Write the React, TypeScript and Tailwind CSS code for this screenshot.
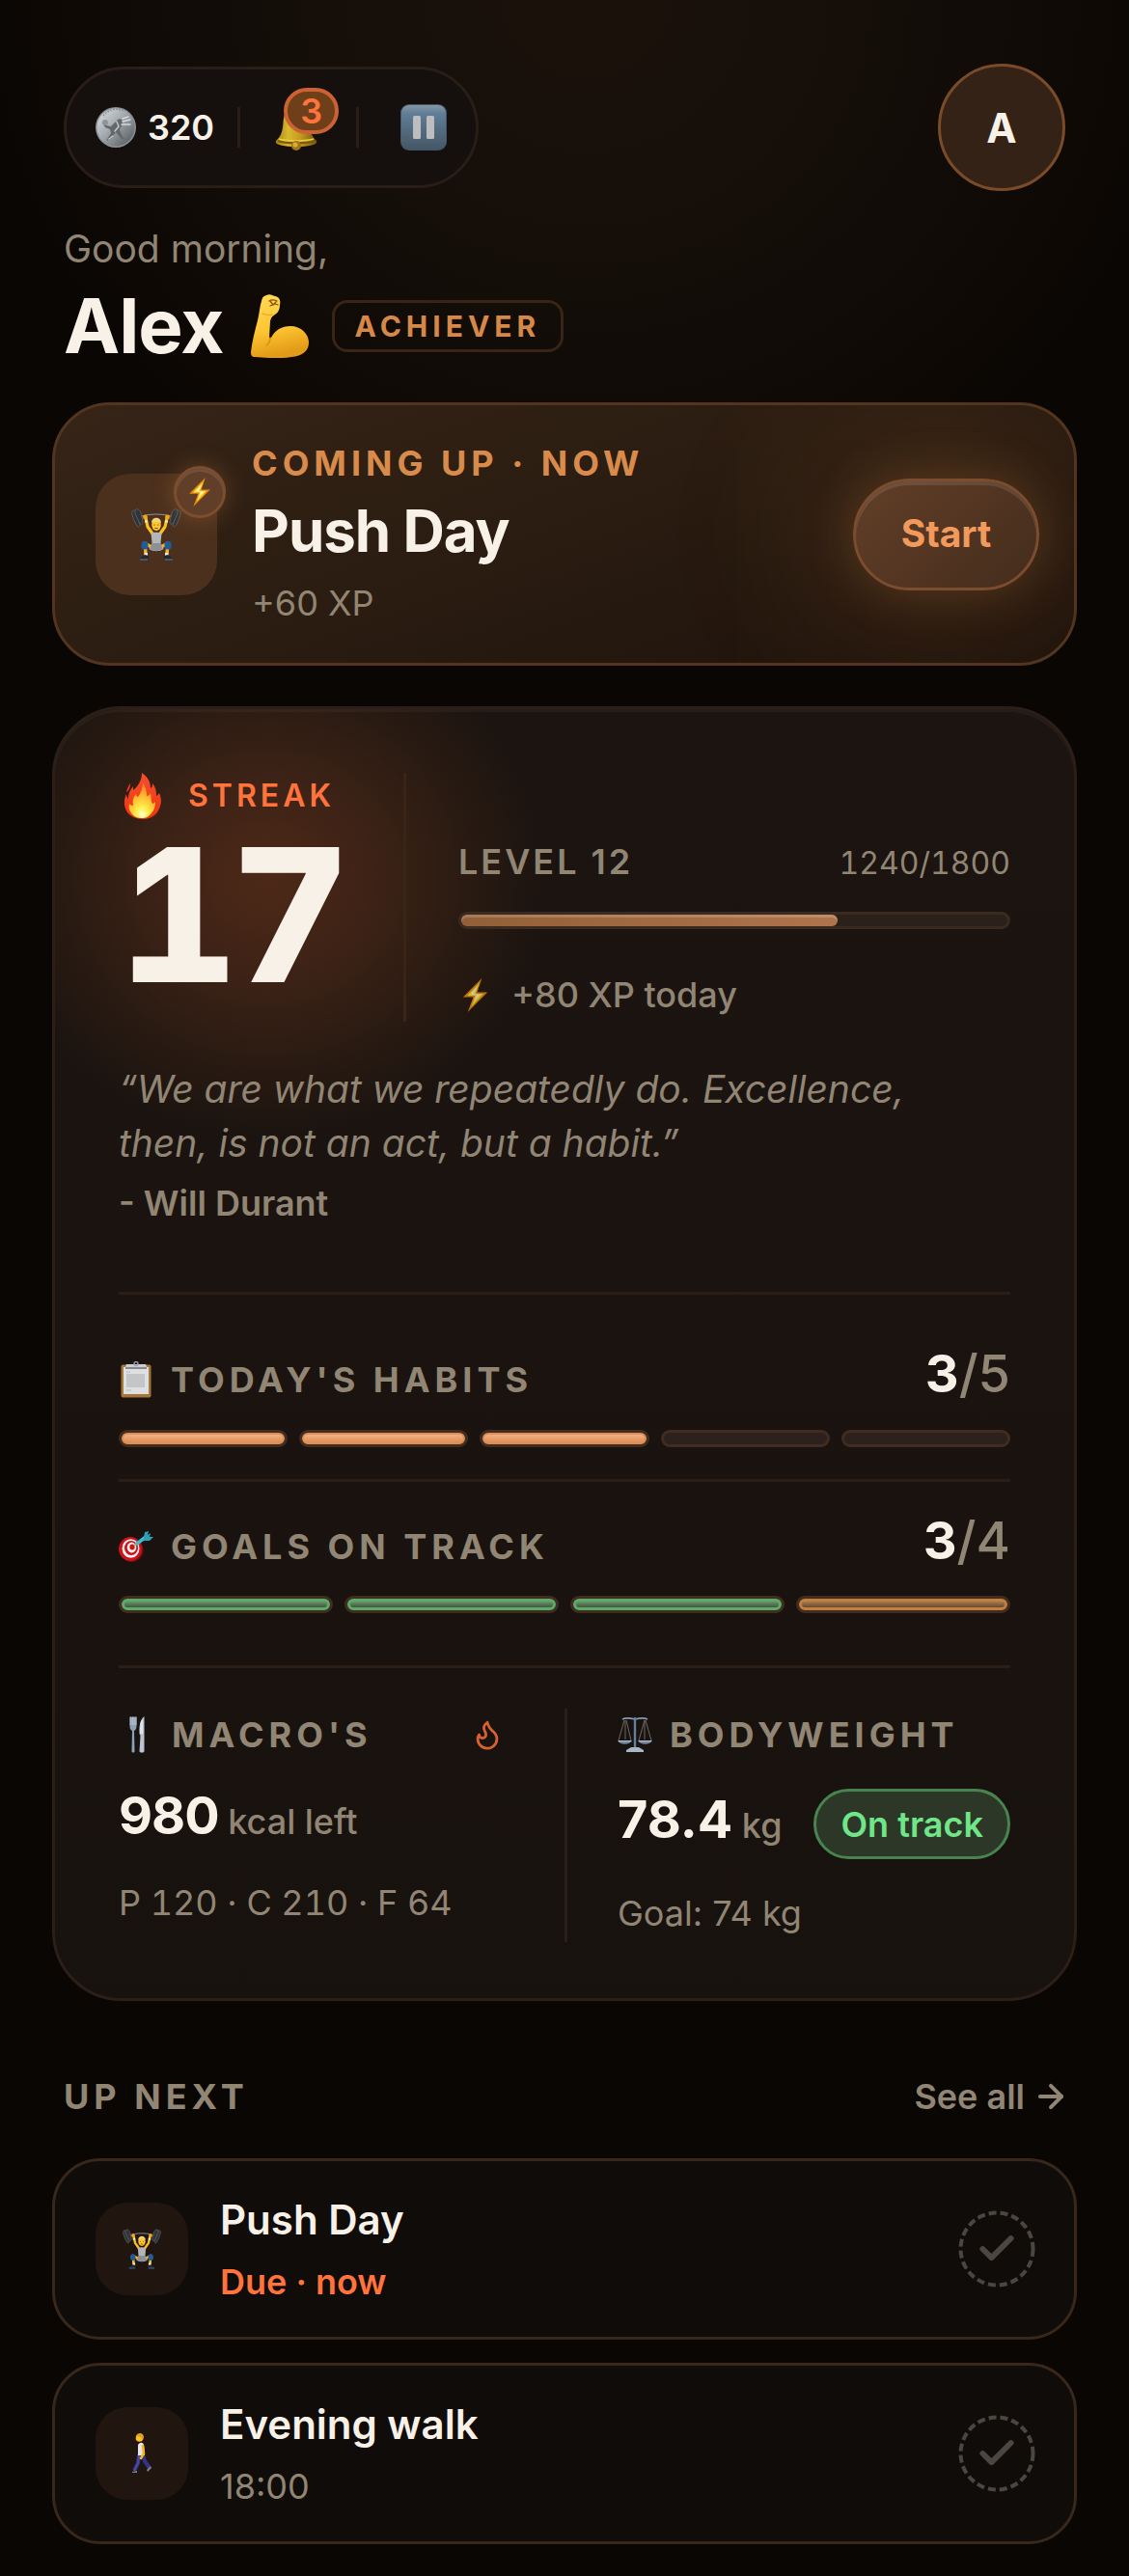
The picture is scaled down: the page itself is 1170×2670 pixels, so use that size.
import { ArrowRight, Check, Flame } from "lucide-react";

type IconProps = { className?: string };

const CoinIcon = ({ className }: IconProps) => (
    <svg viewBox="0 0 42 42" className={className} aria-hidden="true">
        <defs>
            <linearGradient id="coin" x1="0" y1="0" x2="1" y2="1">
                <stop offset="0" stopColor="#dfe3e6" />
                <stop offset="0.45" stopColor="#a3a9ad" />
                <stop offset="1" stopColor="#4c5154" />
            </linearGradient>
        </defs>
        <circle cx="21" cy="21" r="21" fill="#8b9195" />
        <circle cx="21" cy="21" r="19.500" fill="url(#coin)" />
        <path d="M8 9a17 17 0 0 1 21-5" fill="none" stroke="#8b9094" strokeWidth="1.500" strokeDasharray="2 1" />
        <path d="M23 13c3-2 5 0 5 3 0 4-3 5-3 8l3 7 4 3-5-1-6-7-5 7-5 2 5-8-1-4-5-2-2-3 3 1 5 1z" fill="#62686c" />
        <path d="M28 12l6-2M28 15l8-2M27 18l9 0" stroke="#d5d9db" strokeWidth="1.500" strokeLinecap="round" />
        <path d="M22 15l2 5-4 5M18 30l-4 3" fill="none" stroke="#c3c8cb" strokeWidth="1.500" strokeLinecap="round" />
        <circle cx="10" cy="16" r="3" fill="#8d9397" />
    </svg>
);

const BellIcon = ({ className }: IconProps) => (
    <svg viewBox="0 0 44 50" className={className} aria-hidden="true">
        <defs>
            <linearGradient id="bell" x1="0" x2="1">
                <stop offset="0" stopColor="#a47f14" />
                <stop offset="0.3" stopColor="#d9b92c" />
                <stop offset="0.6" stopColor="#c69a1e" />
                <stop offset="1" stopColor="#75550c" />
            </linearGradient>
        </defs>
        <circle cx="22" cy="4" r="3.500" fill="#a8841b" />
        <path d="M22 4c-9 0-13 6-13.500 16C8 31 5 35 1 39c-2 4 8 6 21 6s23-2 21-6c-4-4-7-8-7.500-19C35 10 31 4 22 4z" fill="url(#bell)" />
        <path d="M3 39c6 3 32 3 38 0" fill="none" stroke="#7c5b0d" strokeWidth="2" />
        <path d="M4 37c6 2.500 30 2.500 36 0" fill="none" stroke="#e7cf45" strokeWidth="1.500" />
        <circle cx="22" cy="44" r="5" fill="#a37519" />
        <circle cx="21" cy="43" r="2.500" fill="#d6b036" />
    </svg>
);

const PauseIcon = ({ className }: IconProps) => (
    <svg viewBox="0 0 48 48" className={className} aria-hidden="true">
        <defs>
            <linearGradient id="pause" x1="0" y1="0" x2="0" y2="1">
                <stop offset="0" stopColor="#8797a4" />
                <stop offset="0.2" stopColor="#5f7d96" />
                <stop offset="1" stopColor="#465866" />
            </linearGradient>
        </defs>
        <rect width="48" height="48" rx="9" fill="#41576a" />
        <rect x="1" y="1" width="46" height="45" rx="8" fill="url(#pause)" />
        <rect x="13" y="12" width="8" height="24" rx="1.500" fill="#bdbdbf" />
        <rect x="27" y="12" width="8" height="24" rx="1.500" fill="#bdbdbf" />
    </svg>
);

const MuscleIcon = ({ className }: IconProps) => (
    <svg viewBox="0 0 60 66" className={className} aria-hidden="true">
        <defs>
            <linearGradient id="muscle" x1="0" y1="0" x2="0.2" y2="1">
                <stop offset="0" stopColor="#ffdb58" />
                <stop offset="0.6" stopColor="#fdc533" />
                <stop offset="1" stopColor="#e39a16" />
            </linearGradient>
        </defs>
        <path d="M16 1c4-2 6 0 9 1 5 1 6 5 5 9 0 3-1 8-5 10-3 2-4 3-5 7l-1 17c0 1 1 1 2 0 4-8 11-12 20-12 11 0 19 8 19 17 0 9-7 14-18 15-13 2-26 1-38 0-3 0-4-2-4-5 1-10 4-22 7-33 2-8 2-14 4-20 1-4 2-5 5-6z" fill="url(#muscle)" />
        <path d="M19 7c3-2 6-1 8 0M20 7l3 4 3-3M20 12l5-2 3 1" fill="none" stroke="#8a5208" strokeWidth="1.300" strokeLinecap="round" />
        <path d="M20 45c0 4-1 6-4 8" fill="none" stroke="#d88f12" strokeWidth="1.500" strokeLinecap="round" />
        <path d="M12 20c4 2 7 2 10 1" fill="none" stroke="#edae25" strokeWidth="1.500" strokeLinecap="round" />
    </svg>
);

const LifterIcon = ({ className }: IconProps) => (
    <svg viewBox="0 0 52 54" className={className} aria-hidden="true">
        <path d="M8 9c10-4 26-4 36 0" fill="none" stroke="#8d9397" strokeWidth="1.200" />
        <g fill="#2f3337" stroke="#62686c" strokeWidth="0.800">
            <path d="M1 3c2-2 3-1 4 1l4 13c0 2-2 3-3 1C3 13 0 6 1 3z" />
            <path d="M5 1c2-1 4 1 5 4l2 9c0 3-3 3-4 0L4 5c0-2 0-3 1-4z" />
            <path d="M51 3c-2-2-3-1-4 1l-4 13c0 2 2 3 3 1 3-5 6-12 5-15z" />
            <path d="M47 1c-2-1-4 1-5 4l-2 9c0 3 3 3 4 0l4-9c0-2 0-3-1-4z" />
        </g>
        <path d="M15 10l2 9 5 7M37 10l-2 9-5 7" fill="none" stroke="#fdbf1c" strokeWidth="3.200" strokeLinecap="round" strokeLinejoin="round" />
        <path d="M14 13.500h3M35 13.500h3" stroke="#e9e9ea" strokeWidth="2" />
        <circle cx="14.500" cy="9" r="2.400" fill="#f1a911" />
        <circle cx="37.500" cy="9" r="2.400" fill="#f1a911" />
        <path d="M21 40l-7-4 1 11M31 40l7-4-1 11" fill="none" stroke="#fbb714" strokeWidth="3.400" strokeLinejoin="round" />
        <path d="M20.500 25.500c3-1 8-1 11 0L30.500 36l3 6c-4 3-11 3-15 0l3-6z" fill="#b4b5b8" />
        <path d="M21.500 36h9l2 6c-4 2.500-9 2.500-13 0z" fill="#8e9094" />
        <rect x="10.500" y="34" width="7" height="8.500" rx="3" fill="#1f5c9c" />
        <rect x="34.500" y="34" width="7" height="8.500" rx="3" fill="#1f5c9c" />
        <path d="M13.500 46h3.500v3h-3.500zM35 46h3.500v3H35z" fill="#e8e8e8" />
        <path d="M18 49v3l-9 1c0-3 3-3 5-5zM34 49v3l9 1c0-3-3-3-5-5z" fill="#25282c" />
        <path d="M9 53h8M35 53h8" stroke="#4a82b8" strokeWidth="1" />
        <ellipse cx="26" cy="17" rx="4.800" ry="6" fill="#fec62d" />
        <path d="M21 15c0-7 10-7 10 0-3-2-7-2-10 0z" fill="#f3d27a" />
        <path d="M24 16.500v1.200M28 16.500v1.200M24.300 20.500h3.400" stroke="#6b3c09" strokeWidth="0.900" />
    </svg>
);

const WalkerIcon = ({ className }: IconProps) => (
    <svg viewBox="0 0 20 42" className={className} aria-hidden="true">
        <path d="M7 22l-1 9-4 8M11 22l2 7 5 7" fill="none" stroke="#33338a" strokeWidth="4" strokeLinejoin="round" />
        <path d="M7 23l-1 8-4 8" fill="none" stroke="#4a4ba6" strokeWidth="2" />
        <path d="M6 12c2-3 5-3 6 0l1 11H6z" fill="#e3e6ec" />
        <path d="M11 13l1 8-3 5" fill="none" stroke="#f7b51c" strokeWidth="2.600" strokeLinecap="round" />
        <path d="M0 40l5-1v2H0zM15 38l4-4 1 2-4 4z" fill="#7b7f88" />
        <circle cx="7.500" cy="5" r="3.800" fill="#fdbf24" />
        <path d="M4 3c1-4 8-4 8 1l-1 3-2-3z" fill="#dda01f" />
    </svg>
);

const BoltIcon = ({ className }: IconProps) => (
    <svg viewBox="0 0 26 36" className={className} aria-hidden="true">
        <path d="M20 0L0 20h11L5 36l21-21H15z" fill="#e58d0a" />
        <path d="M17.500 5L4.500 18.500H13L9 30l12.500-13.500H13z" fill="#ffe04a" />
        <path d="M15 9l-7 8h7l-3 7 6-6.500h-7z" fill="#fff6c4" />
    </svg>
);

const FireIcon = ({ className }: IconProps) => (
    <svg viewBox="0 0 38 48" className={className} aria-hidden="true">
        <defs>
            <linearGradient id="fireOuter" x1="0" y1="0" x2="0" y2="1">
                <stop offset="0" stopColor="#f4502d" />
                <stop offset="1" stopColor="#f0330f" />
            </linearGradient>
            <radialGradient id="fireInner" cx="0.5" cy="0.9" r="0.85">
                <stop offset="0" stopColor="#fffde0" />
                <stop offset="0.25" stopColor="#fff04a" />
                <stop offset="0.6" stopColor="#fdbb30" />
                <stop offset="1" stopColor="#fb7b2c" />
            </radialGradient>
        </defs>
        <path d="M18 0c7 5 9 10 9 16 2-1 2-3 2-5 4 5 4 9 4 13 2-1 2-2 3-3 4 9 1 15-2 20-3 4-8 7-15 7S6 45 3 41c-4-6-4-13-1-19 0 2 1 4 2 5 0-6 2-9 5-13v4c5-4 9-10 9-18z" fill="url(#fireOuter)" />
        <path d="M19 10c3 5 4 9 4 14 2 0 3-1 4-3 1 5 0 8 2 11 1 0 2-1 3-2 0 6-2 10-5 13-3 3-5 4-9 4s-7-1-10-4-4-7-3-11c1 1 2 2 4 2-1-5 0-9 3-12 0 2 1 3 2 3 3-4 5-9 5-15z" fill="url(#fireInner)" />
        <path d="M6 11c-2 3-3 5-4 9 2-1 4-4 4-9z" fill="#ee3f22" />
    </svg>
);

const ClipboardIcon = ({ className }: IconProps) => (
    <svg viewBox="0 0 32 38" className={className} aria-hidden="true">
        <rect x="0.500" y="3.500" width="31" height="34" rx="2" fill="#a57638" />
        <rect x="3" y="6" width="26" height="28" fill="#dedfe0" />
        <rect x="6" y="13" width="19" height="14" fill="#c4c5c6" />
        <path d="M6 11h4M6 30h5" stroke="#b9babb" strokeWidth="1" />
        <path d="M5 4h22v4H5z" fill="#8b8688" />
        <path d="M6 3h20l1 3H5z" fill="#c9cdd6" />
        <circle cx="16" cy="2.500" r="2" fill="none" stroke="#9ba3b5" strokeWidth="1.300" />
    </svg>
);

const TargetIcon = ({ className }: IconProps) => (
    <svg viewBox="0 0 36 32" className={className} aria-hidden="true">
        <ellipse cx="13.500" cy="19.500" rx="12" ry="12.500" fill="#7c0a0d" />
        <ellipse cx="12" cy="18.500" rx="12" ry="12.500" fill="#cd1219" />
        <ellipse cx="12.500" cy="18" rx="9" ry="9.800" fill="#f1eeee" />
        <ellipse cx="13" cy="17.500" rx="7" ry="7.600" fill="#cd1219" />
        <ellipse cx="13.500" cy="17" rx="4.800" ry="5.400" fill="#f1eeee" />
        <ellipse cx="14" cy="16.500" rx="2.600" ry="3" fill="#cd1219" />
        <path d="M16 15l4-3" stroke="#d8a62f" strokeWidth="2" />
        <path d="M19 13l9-7" stroke="#37bcd0" strokeWidth="3.500" strokeLinecap="round" />
        <path d="M26 7l1-6 4-1-1 4 3-2-1 4 4 0-4 4-6 0z" fill="#2f9fb4" />
    </svg>
);

const CutleryIcon = ({ className }: IconProps) => (
    <svg viewBox="0 0 16 38" className={className} aria-hidden="true">
        <path d="M0.500 1v9c0 3 1 4 2.500 5L2.500 36c0 2 3 2 3 0L5 15c1.500-1 2.500-2 2.500-5V1" fill="#8fa0b4" />
        <path d="M1.200 0v9M3.200 0v9M5 0v9M7 0v9" stroke="#c6cfd9" strokeWidth="0.800" />
        <path d="M15.500 0c-4 3-5.500 9-5 18l1 2-1 16c0 2 5 2 5 0z" fill="#b9c4d2" />
        <path d="M12 5c-1 4-1 8-1 13h3V3z" fill="#dde5ee" />
    </svg>
);

const ScalesIcon = ({ className }: IconProps) => (
    <svg viewBox="0 0 36 36" className={className} aria-hidden="true">
        <path d="M5 2c4-2 9-1 13 0 4-1 9-2 13 0" fill="none" stroke="#8a98a8" strokeWidth="1.800" />
        <path d="M18 0v32" stroke="#64809e" strokeWidth="2.400" />
        <path d="M7 3L1 24M8 3v20M9 3l5 21M28 3l-6 21M28 3v20M29 3l6 21" fill="none" stroke="#77716e" strokeWidth="0.900" />
        <path d="M0 24h15c-2 5-13 5-15 0zM21 24h15c-2 5-13 5-15 0z" fill="#7388a0" />
        <path d="M1 24.500h13M22 24.500h13" stroke="#b9c3cd" strokeWidth="1" />
        <path d="M14 31h8l5 3v2H9v-2z" fill="#a9b6c4" />
    </svg>
);

const upNext = [
    { title: "Push Day", detail: "Due · now", due: true, Icon: LifterIcon, size: "w-10 h-[42px]" },
    { title: "Evening walk", detail: "18:00", due: false, Icon: WalkerIcon, size: "w-5 h-[42px]" },
];

const habits = [true, true, true, false, false];
const goals = ["green", "green", "green", "amber"];

function TopBar() {
    return (
        <header className="flex items-center justify-between px-3">
            <div className="flex h-[126px] items-center rounded-full border-3 border-[#291d17] bg-[#15100e] px-[30px]">
                <CoinIcon className="size-[42px]" />
                <span className="ml-3 text-[36px] leading-[44px] font-semibold">320</span>
                <span className="ml-6 h-[42px] w-[3px] bg-[#291d17]" />
                <button type="button" aria-label="Notifications" className="relative ml-9">
                    <BellIcon className="h-[50px] w-11" />
                    <span className="absolute -top-4 left-[9px] flex h-12 w-[57px] items-center justify-center rounded-full border-4 border-[#cc6233] bg-[#6f3f19] text-[36px] leading-none font-semibold text-[#ff733d]">
                        3
                    </span>
                </button>
                <span className="ml-10 h-[42px] w-[3px] bg-[#291d17]" />
                <button type="button" aria-label="Pause" className="ml-[43px]">
                    <PauseIcon className="size-12" />
                </button>
            </div>
            <button type="button" className="size-[132px] rounded-full border-3 border-[#7a4b28] bg-[#352216] text-[42px] font-bold">
                A
            </button>
        </header>
    );
}

function Greeting() {
    return (
        <div className="mt-9 px-3">
            <p className="text-[39px] leading-[48px] text-[#918574]">Good morning,</p>
            <div className="mt-3.5 flex items-center">
                <h1 className="text-[78px] leading-[84px] font-bold tracking-[-1px]">Alex</h1>
                <MuscleIcon className="ml-7 h-[66px] w-[60px]" />
                <span className="ml-6 flex h-[54px] items-center rounded-[16px] border-3 border-[#3a2417] px-[21px] text-[30px] font-bold tracking-[5px] text-[#d68848]">
                    ACHIEVER
                </span>
            </div>
        </div>
    );
}

function ComingUp() {
    return (
        <section className="mt-[37px] flex items-center overflow-hidden rounded-[60px] border-3 border-[#53341f] bg-linear-160 from-[#362417] via-[#2a1c11] to-[#1c110b] py-[38px] pr-9 pl-[42px]">
            <div className="relative flex size-[126px] items-center justify-center rounded-[36px] bg-[#4b301d]">
                <LifterIcon className="h-[54px] w-[52px]" />
                <span className="absolute -top-2 -right-[9px] flex size-[54px] items-center justify-center rounded-full border-3 border-[#7d4e2e] bg-[#603e27] shadow-[0_0_24px_rgba(214,136,72,0.3),inset_0_3px_0_rgba(255,255,255,0.1)]">
                    <BoltIcon className="h-[30px] w-[22px]" />
                </span>
            </div>
            <div className="ml-9 grow">
                <p className="text-[36px] leading-[44px] font-bold tracking-[5px] text-[#d98b4c]">COMING UP · NOW</p>
                <h2 className="mt-3 text-[60px] leading-[72px] font-bold tracking-[-1px]">Push Day</h2>
                <p className="mt-[17px] mb-0.5 text-[36px] leading-[44px] text-[#918574]">+60 XP</p>
            </div>
            <button
                type="button"
                className="h-[116px] w-[193px] rounded-full border-3 border-[#7b4d2e] bg-linear-135 from-[#623f28] to-[#442c1c] text-[39px] font-bold text-[#f2995c] shadow-[0_0_54px_rgba(214,136,72,0.24),0_0_180px_40px_rgba(214,136,72,0.18),inset_0_4px_0_rgba(255,255,255,0.1)]"
            >
                Start
            </button>
        </section>
    );
}

function StreakAndLevel() {
    return (
        <div className="flex">
            <div className="w-[295px] shrink-0 pb-3">
                <div className="flex h-12 items-center">
                    <FireIcon className="ml-1.5 h-12 w-[38px]" />
                    <span className="ml-7 text-[32px] font-semibold tracking-[4px] text-[#ff733d]">STREAK</span>
                </div>
                <p className="text-[192px] leading-[198px] font-extrabold tracking-[-8px] tabular-nums">17</p>
            </div>
            <div className="flex grow flex-col justify-end border-l-3 border-[#3a2418] pb-1.5 pl-[54px] text-[#918574]">
                <div className="flex items-baseline justify-between leading-[44px]">
                    <span className="text-[36px] font-semibold tracking-[3px]">LEVEL 12</span>
                    <span className="text-[32px] tabular-nums">1240/1800</span>
                </div>
                <div
                    role="progressbar"
                    aria-label="Level progress"
                    aria-valuenow={1240}
                    aria-valuemax={1800}
                    className="mt-7 h-[18px] rounded-full border-3 border-[#3b2a20] bg-[#2c211a]"
                >
                    <div
                        className="h-full rounded-full bg-linear-to-r from-[#925f37] to-[#b0744c] shadow-[inset_0_3px_0_rgba(255,255,255,0.18)]"
                        style={{ width: `${(1240 / 1800) * 100}%` }}
                    />
                </div>
                <p className="mt-[46px] flex items-center text-[36px] leading-[44px] font-medium">
                    <BoltIcon className="ml-1 h-[35px] w-[27px] opacity-80" />
                    <span className="ml-6">+80 XP today</span>
                </p>
            </div>
        </div>
    );
}

function Habits() {
    return (
        <div className="border-t-3 border-[#2b1e16] pt-[50px] pb-[33px]">
            <div className="flex items-end justify-between text-[#918574]">
                <div className="flex items-center pb-1">
                    <ClipboardIcon className="ml-0.5 h-[38px] w-8" />
                    <h3 className="ml-5 text-[36px] leading-[44px] font-bold tracking-[5px]">TODAY'S HABITS</h3>
                </div>
                <span className="text-[54px] leading-[64px] font-medium">
                    <b className="text-[#f8f1e8]">3</b>/5
                </span>
            </div>
            <div className="mt-[26px] flex gap-3">
                {habits.map((done, i) => (
                    <div key={i} className="h-[18px] flex-1 rounded-full border-3 border-[#412c22] bg-[#2c211d]">
                        {done && <div className="h-full rounded-full border-2 border-[#df8e54] bg-linear-to-b from-[#f0b084] to-[#df8e54]" />}
                    </div>
                ))}
            </div>
        </div>
    );
}

function Goals() {
    return (
        <div className="border-t-3 border-[#2b1e16] pt-[29px] pb-[54px]">
            <div className="flex items-end justify-between text-[#918574]">
                <div className="flex items-center pb-1">
                    <TargetIcon className="h-8 w-9" />
                    <h3 className="ml-[18px] text-[36px] leading-[44px] font-bold tracking-[5px]">GOALS ON TRACK</h3>
                </div>
                <span className="text-[54px] leading-[64px] font-medium">
                    <b className="text-[#f8f1e8]">3</b>/4
                </span>
            </div>
            <div className="mt-[25px] flex gap-3">
                {goals.map((color, i) => (
                    <div key={i} className="h-[18px] flex-1 rounded-full border-3 border-[#412c22]">
                        <div
                            className={
                                color === "green"
                                    ? "h-full rounded-full border-3 border-[#5dac66] bg-linear-to-b from-[#6b9470] to-[#40583f]"
                                    : "h-full rounded-full border-3 border-[#c27f3e] bg-linear-to-b from-[#a57a50] to-[#6b4a2b]"
                            }
                        />
                    </div>
                ))}
            </div>
        </div>
    );
}

function BodyStats() {
    return (
        <div className="grid grid-cols-2 border-t-3 border-[#2b1e16] pt-[42px] text-[36px] leading-[44px] text-[#918574]">
            <div className="pt-[5px] pr-[63px]">
                <div className="flex items-center">
                    <CutleryIcon className="ml-[11px] h-[38px] w-4" />
                    <h3 className="ml-7 font-bold tracking-[5px]">MACRO'S</h3>
                    <Flame className="ml-auto size-[34px] text-[#d4612f]" />
                </div>
                <p className="mt-[30px] leading-[64px] font-medium">
                    <b className="text-[54px] tracking-[-1px] text-[#f8f1e8]">980</b> kcal left
                </p>
                <p className="mt-[30px] tabular-nums">P 120 · C 210 · F 64</p>
            </div>
            <div className="border-l-3 border-[#2b1e16] pt-[5px] pb-2 pl-[52px]">
                <div className="flex items-center">
                    <ScalesIcon className="size-9" />
                    <h3 className="ml-[18px] font-bold tracking-[5px]">BODYWEIGHT</h3>
                </div>
                <div className="mt-[34px] flex items-start justify-between">
                    <p className="leading-[64px] font-medium">
                        <b className="text-[54px] text-[#f8f1e8]">78.4</b> kg
                    </p>
                    <span className="flex h-[73px] items-center rounded-full border-3 border-[#478450] bg-[#2c3727] px-[25px] font-semibold text-[#70e689]">
                        On track
                    </span>
                </div>
                <p className="mt-[34px]">Goal: 74 kg</p>
            </div>
        </div>
    );
}

function UpNext() {
    return (
        <section className="mt-[77px]">
            <div className="flex items-center justify-between px-3 text-[36px] leading-[44px] text-[#918574]">
                <h2 className="font-bold tracking-[5px]">UP NEXT</h2>
                <a href="#schedule" className="flex items-center gap-2 font-semibold">
                    See all
                    <ArrowRight className="-mr-1 size-[38px]" strokeWidth={2.5} />
                </a>
            </div>
            <ul className="mt-[42px] flex flex-col gap-6">
                {upNext.map(({ title, detail, due, Icon, size }) => (
                    <li key={title} className="flex items-center rounded-[50px] border-3 border-[#38271b] bg-[#100c0a] py-[35px] pr-10 pl-[42px]">
                        <span className="flex size-24 items-center justify-center rounded-[33px] bg-[#20160f]">
                            <Icon className={size} />
                        </span>
                        <div className="ml-[33px] grow">
                            <h3 className="text-[42px] leading-[52px] font-semibold">{title}</h3>
                            <p className={due ? "mt-4 text-[36px] leading-[44px] font-semibold text-[#ff733d]" : "mt-4 text-[36px] leading-[44px] text-[#918574]"}>
                                {detail}
                            </p>
                        </div>
                        <button type="button" aria-label={`Complete ${title}`} className="relative flex size-20 items-center justify-center">
                            <svg viewBox="0 0 80 80" className="absolute inset-0" fill="none">
                                <circle cx="40" cy="40" r="37.500" stroke="#4b4642" strokeWidth="4" strokeDasharray="8 4" />
                            </svg>
                            <Check className="size-11 text-[#4b4642]" strokeWidth={3.2} />
                        </button>
                    </li>
                ))}
            </ul>
        </section>
    );
}

export default function App() {
    return (
        <main className="min-h-screen bg-[#0a0603] bg-[radial-gradient(ellipse_640px_600px_at_52%_0,#1b110b,#140e09_50%,#0a0603)] px-[54px] pt-[66px] pb-8 font-['Inter',sans-serif] text-[#f8f1e8]">
            <TopBar />
            <Greeting />
            <ComingUp />
            <section className="mt-[42px] rounded-[72px] border-3 border-[#2c1f17] bg-[radial-gradient(ellipse_290px_270px_at_220px_175px,#4d2917,#3c2216_40%,#2a1b12_70%,transparent),linear-gradient(#1c1410,#18120f)] px-[66px] pt-[66px] pb-[58px] shadow-[inset_0_3px_0_rgba(255,255,255,0.04)]">
                <StreakAndLevel />
                <blockquote className="mt-[42px] pb-[70px] text-[#918574]">
                    <p className="max-w-[860px] text-[39px] leading-[56px] italic">“We are what we repeatedly do. Excellence, then, is not an act, but a habit.”</p>
                    <footer className="mt-3 text-[36px] leading-[44px] font-semibold">- Will Durant</footer>
                </blockquote>
                <Habits />
                <Goals />
                <BodyStats />
            </section>
            <UpNext />
        </main>
    );
}
